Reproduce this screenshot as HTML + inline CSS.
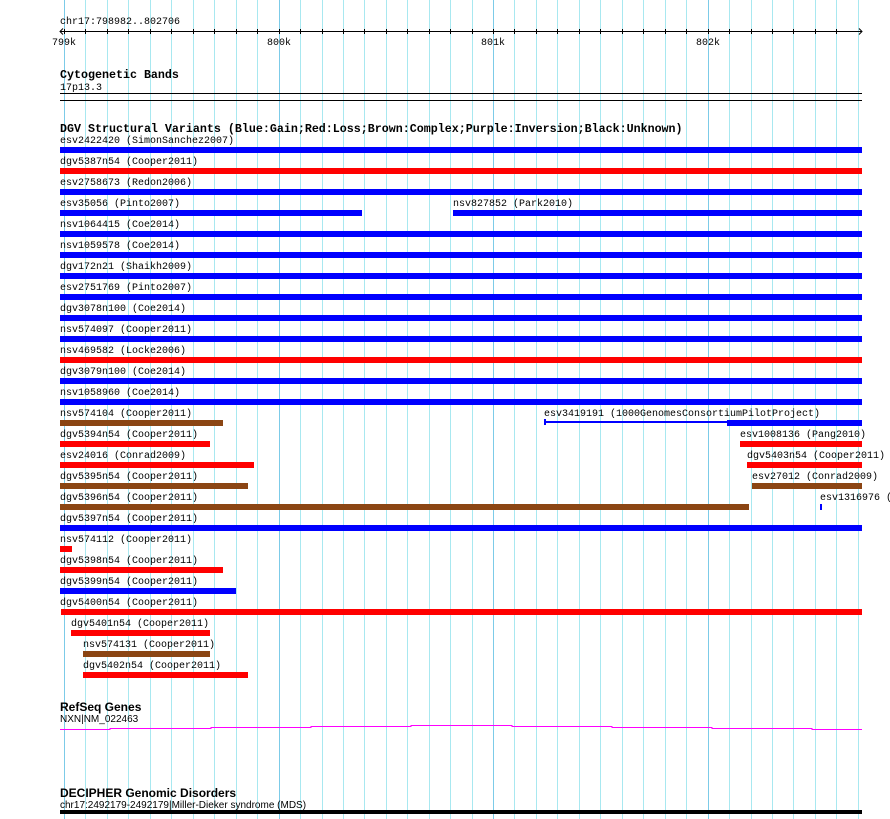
<!DOCTYPE html>
<html><head><meta charset="utf-8"><style>
html,body{margin:0;padding:0;background:#fff;width:890px;height:819px;overflow:hidden}
svg{display:block}
.m{font-family:"Liberation Mono",monospace;font-size:10px;fill:#000}
.h{font-family:"Liberation Mono",monospace;font-size:11.67px;font-weight:bold;fill:#000}
.s{font-family:"Liberation Sans Narrow","Liberation Sans",sans-serif;font-size:10px;fill:#000}
.sh{font-family:"Liberation Sans Narrow","Liberation Sans",sans-serif;font-size:12px;font-weight:bold;fill:#000}
</style></head><body>
<svg width="890" height="819" xmlns="http://www.w3.org/2000/svg">
<path stroke="#a8e8f0" fill="none" d="M85.5 0V819M107.5 0V819M128.5 0V819M150.5 0V819M171.5 0V819M193.5 0V819M214.5 0V819M236.5 0V819M257.5 0V819M300.5 0V819M322.5 0V819M343.5 0V819M364.5 0V819M386.5 0V819M407.5 0V819M429.5 0V819M450.5 0V819M472.5 0V819M514.5 0V819M536.5 0V819M557.5 0V819M579.5 0V819M600.5 0V819M622.5 0V819M643.5 0V819M665.5 0V819M686.5 0V819M729.5 0V819M751.5 0V819M772.5 0V819M793.5 0V819M815.5 0V819M836.5 0V819M858.5 0V819"/>
<path stroke="#7ccbe8" fill="none" d="M64.5 0V819M279.5 0V819M493.5 0V819M708.5 0V819"/>

<text class="m" x="60" y="24">chr17:798982..802706</text>
<line x1="60" y1="31.5" x2="862" y2="31.5" stroke="#000"/>
<path d="M63 28.5 L60 31.5 L63 34.5 M859 28.5 L862 31.5 L859 34.5" stroke="#000" fill="none"/>
<path stroke="#000" fill="none" d="M64.5 29V34M85.5 29V34M107.5 29V34M128.5 29V34M150.5 29V34M171.5 29V34M193.5 29V34M214.5 29V34M236.5 29V34M257.5 29V34M279.5 29V34M300.5 29V34M322.5 29V34M343.5 29V34M364.5 29V34M386.5 29V34M407.5 29V34M429.5 29V34M450.5 29V34M472.5 29V34M493.5 29V34M514.5 29V34M536.5 29V34M557.5 29V34M579.5 29V34M600.5 29V34M622.5 29V34M643.5 29V34M665.5 29V34M686.5 29V34M708.5 29V34M729.5 29V34M751.5 29V34M772.5 29V34M793.5 29V34M815.5 29V34M836.5 29V34"/>
<text class="m" x="52" y="45">799k</text>
<text class="m" x="267" y="45">800k</text>
<text class="m" x="481" y="45">801k</text>
<text class="m" x="696" y="45">802k</text>

<text class="h" x="60" y="78">Cytogenetic Bands</text>
<text class="m" x="60" y="90">17p13.3</text>
<line x1="60" y1="93.5" x2="862" y2="93.5" stroke="#000"/>
<line x1="60" y1="100.5" x2="862" y2="100.5" stroke="#000"/>

<text class="h" x="60" y="132">DGV Structural Variants (Blue:Gain;Red:Loss;Brown:Complex;Purple:Inversion;Black:Unknown)</text>

<g transform="translate(0,-1)">
<text class="m" x="60" y="144">esv2422420 (SimonSanchez2007)</text>
<text class="m" x="60" y="165">dgv5387n54 (Cooper2011)</text>
<text class="m" x="60" y="186">esv2758673 (Redon2006)</text>
<text class="m" x="60" y="207">esv35056 (Pinto2007)</text>
<text class="m" x="453" y="207">nsv827852 (Park2010)</text>
<text class="m" x="60" y="228">nsv1064415 (Coe2014)</text>
<text class="m" x="60" y="249">nsv1059578 (Coe2014)</text>
<text class="m" x="60" y="270">dgv172n21 (Shaikh2009)</text>
<text class="m" x="60" y="291">esv2751769 (Pinto2007)</text>
<text class="m" x="60" y="312">dgv3078n100 (Coe2014)</text>
<text class="m" x="60" y="333">nsv574097 (Cooper2011)</text>
<text class="m" x="60" y="354">nsv469582 (Locke2006)</text>
<text class="m" x="60" y="375">dgv3079n100 (Coe2014)</text>
<text class="m" x="60" y="396">nsv1058960 (Coe2014)</text>
<text class="m" x="60" y="417">nsv574104 (Cooper2011)</text>
<text class="m" x="544" y="417">esv3419191 (1000GenomesConsortiumPilotProject)</text>
<text class="m" x="60" y="438">dgv5394n54 (Cooper2011)</text>
<text class="m" x="740" y="438">esv1008136 (Pang2010)</text>
<text class="m" x="60" y="459">esv24016 (Conrad2009)</text>
<text class="m" x="747" y="459">dgv5403n54 (Cooper2011)</text>
<text class="m" x="60" y="480">dgv5395n54 (Cooper2011)</text>
<text class="m" x="752" y="480">esv27012 (Conrad2009)</text>
<text class="m" x="60" y="501">dgv5396n54 (Cooper2011)</text>
<text class="m" x="820" y="501">esv1316976 (</text>
<text class="m" x="60" y="522">dgv5397n54 (Cooper2011)</text>
<text class="m" x="60" y="543">nsv574112 (Cooper2011)</text>
<text class="m" x="60" y="564">dgv5398n54 (Cooper2011)</text>
<text class="m" x="60" y="585">dgv5399n54 (Cooper2011)</text>
<text class="m" x="60" y="606">dgv5400n54 (Cooper2011)</text>
<text class="m" x="71" y="627">dgv5401n54 (Cooper2011)</text>
<text class="m" x="83" y="648">nsv574131 (Cooper2011)</text>
<text class="m" x="83" y="669">dgv5402n54 (Cooper2011)</text>
</g>

<rect x="60" y="147" width="802" height="6" fill="#0000ff"/>
<rect x="60" y="168" width="802" height="6" fill="#ff0000"/>
<rect x="60" y="189" width="802" height="6" fill="#0000ff"/>
<rect x="60" y="210" width="302" height="6" fill="#0000ff"/>
<rect x="453" y="210" width="409" height="6" fill="#0000ff"/>
<rect x="60" y="231" width="802" height="6" fill="#0000ff"/>
<rect x="60" y="252" width="802" height="6" fill="#0000ff"/>
<rect x="60" y="273" width="802" height="6" fill="#0000ff"/>
<rect x="60" y="294" width="802" height="6" fill="#0000ff"/>
<rect x="60" y="315" width="802" height="6" fill="#0000ff"/>
<rect x="60" y="336" width="802" height="6" fill="#0000ff"/>
<rect x="60" y="357" width="802" height="6" fill="#ff0000"/>
<rect x="60" y="378" width="802" height="6" fill="#0000ff"/>
<rect x="60" y="399" width="802" height="6" fill="#0000ff"/>
<rect x="60" y="420" width="163" height="6" fill="#8b4513"/>
<rect x="544" y="421" width="183" height="2" fill="#0000ff"/><rect x="544" y="419" width="2" height="6" fill="#0000ff"/><rect x="727" y="420" width="135" height="6" fill="#0000ff"/>
<rect x="60" y="441" width="150" height="6" fill="#ff0000"/>
<rect x="740" y="441" width="122" height="6" fill="#ff0000"/>
<rect x="60" y="462" width="194" height="6" fill="#ff0000"/>
<rect x="747" y="462" width="115" height="6" fill="#ff0000"/>
<rect x="60" y="483" width="188" height="6" fill="#8b4513"/>
<rect x="752" y="483" width="110" height="6" fill="#8b4513"/>
<rect x="60" y="504" width="689" height="6" fill="#8b4513"/>
<rect x="820" y="504" width="2" height="6" fill="#0000ff"/>
<rect x="60" y="525" width="802" height="6" fill="#0000ff"/>
<rect x="60" y="546" width="12" height="6" fill="#ff0000"/>
<rect x="60" y="567" width="163" height="6" fill="#ff0000"/>
<rect x="60" y="588" width="176" height="6" fill="#0000ff"/>
<rect x="61" y="609" width="801" height="6" fill="#ff0000"/>
<rect x="71" y="630" width="139" height="6" fill="#ff0000"/>
<rect x="83" y="651" width="127" height="6" fill="#8b4513"/>
<rect x="83" y="672" width="165" height="6" fill="#ff0000"/>

<text class="sh" x="60" y="711">RefSeq Genes</text>
<text class="s" x="60" y="722">NXN|NM_022463</text>
<path d="M60 729.5 H110 V728.5 H211 V727.5 H311 V726.5 H411 V725.5 H512 V726.5 H612 V727.5 H712 V728.5 H812 V729.5 H862" stroke="#ff00ff" fill="none"/>

<text class="sh" x="60" y="797">DECIPHER Genomic Disorders</text>
<text class="s" x="60" y="808">chr17:2492179-2492179|Miller-Dieker syndrome (MDS)</text>
<rect x="60" y="810" width="802" height="4" fill="#000"/>
</svg>
</body></html>
